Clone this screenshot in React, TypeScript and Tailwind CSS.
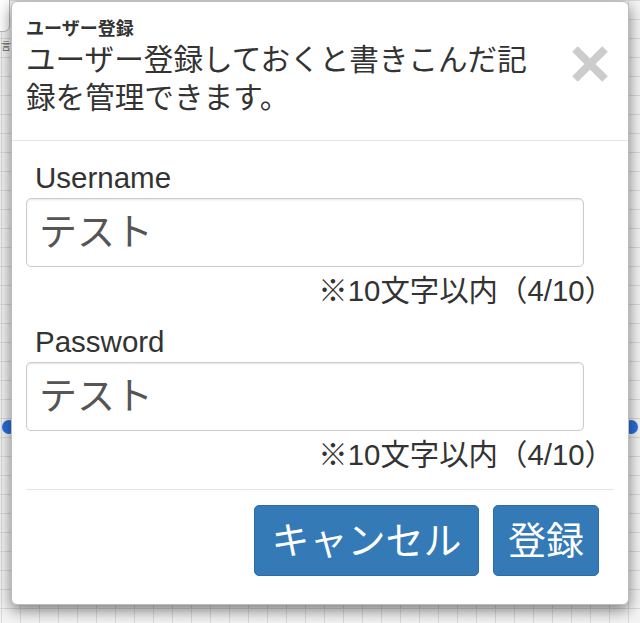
import React from 'react';

const FONT = "font-['Liberation_Sans','Noto_Sans_CJK_JP',sans-serif]";

function CloseIcon() {
  return (
    <svg width="38" height="38" viewBox="0 0 38 38" aria-hidden="true">
      <path d="M4 4 L34 34 M34 4 L4 34" stroke="#cccccc" strokeWidth="8" strokeLinecap="butt" />
    </svg>
  );
}

function Field({ label }: { label: string }) {
  return (
    <div className="flex flex-col">
      <label className="pl-[9px] text-[29.5px] leading-[34px] text-[#333]">{label}</label>
      <div className="mt-[3px] w-[558px] h-[69px] rounded-[5px] border border-[#ccc] shadow-[inset_0_1px_2px_rgba(0,0,0,0.1)] flex items-center pl-[12px] text-[38px] text-[#555]">
        テスト
      </div>
      <div className="mt-[7px] text-right text-[29.4px] leading-[34px] text-[#333]">
        ※10文字以内（4/10）
      </div>
    </div>
  );
}

export default function App() {
  return (
    <div
      className={`${FONT} relative w-[640px] h-[623px] overflow-hidden bg-[#f4f4f4] bg-[linear-gradient(#dadada_1px,transparent_1px),linear-gradient(90deg,#dadada_1px,transparent_1px)] bg-[size:19px_19px] bg-[position:1px_0]`}
    >
      {/* bits of the page behind the dialog */}
      <div className="absolute left-[-12px] top-[-6px] w-[22px] h-[38px] rounded-[6px] border border-[#bbb] bg-white" />
      <div className="absolute left-[1px] top-[42px] text-[10px] leading-[10px] text-[#666]">言</div>
      <div className="absolute left-[2px] top-[420px] w-[14px] h-[14px] rounded-full bg-[#2a6fdb]" />
      <div className="absolute left-[624px] top-[420px] w-[14px] h-[14px] rounded-full bg-[#2a6fdb]" />

      <div className="relative ml-[11px] mt-[1px] w-[618px] h-[604px] rounded-[6px] border border-[#bdbdbd] bg-white shadow-[0_5px_15px_rgba(0,0,0,0.5)] flex flex-col">
        <div className="h-[139px] border-b border-[#e5e5e5] flex pl-[14px] pr-[19px] pt-[17px]">
          <div className="flex-1">
            <div className="text-[18px] font-bold leading-[20px] text-[#333]">ユーザー登録</div>
            <p className="mt-[2px] w-[525px] text-[29.6px] leading-[38px] text-[#333]">
              ユーザー登録しておくと書きこんだ記録を管理できます。
            </p>
          </div>
          <button className="self-start mt-[26px]">
            <CloseIcon />
          </button>
        </div>

        <div className="px-[14px] pt-[20px] pb-[17px] flex flex-col gap-[17px]">
          <Field label="Username" />
          <Field label="Password" />
        </div>

        <div className="mx-[14px] border-t border-[#e5e5e5] pt-[15px] pr-[15px] flex justify-end gap-[14px]">
          <button className="w-[225px] h-[71px] rounded-[5px] border border-[#2e6da4] bg-[#337ab7] text-white text-[38px] leading-none">
            キャンセル
          </button>
          <button className="w-[106px] h-[71px] rounded-[5px] border border-[#2e6da4] bg-[#337ab7] text-white text-[38px] leading-none">
            登録
          </button>
        </div>
      </div>
    </div>
  );
}
